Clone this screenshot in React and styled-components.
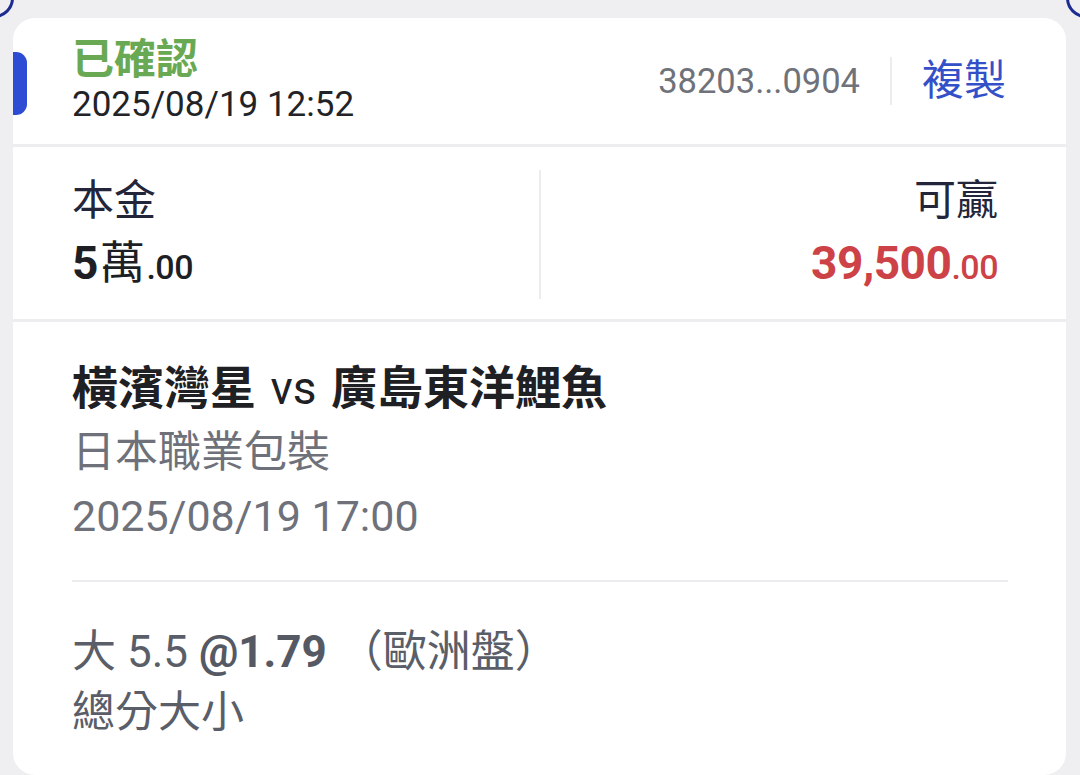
import React from "react";
import styled, { createGlobalStyle } from "styled-components";

const GlobalStyle = createGlobalStyle`
  html, body {
    margin: 0;
    padding: 0;
    background: #efeff1;
  }
  body {
    font-family: Roboto, "Noto Sans CJK TC", "Noto Sans", sans-serif;
    overflow: hidden;
  }
`;

const Page = styled.div`
  position: relative;
  width: 1080px;
  height: 775px;
  padding: 18px 14px 0 13px;
  box-sizing: border-box;
  overflow: hidden;
`;

const Ring = styled.div`
  position: absolute;
  top: -22px;
  ${(p) => (p.right ? "right: -26px;" : "left: -26px;")}
  width: 34px;
  height: 34px;
  border-radius: 50%;
  border: 3px solid #1c2c8f;
`;

const Card = styled.div`
  position: relative;
  background: #ffffff;
  border-radius: 22px;
  height: 757px;
  overflow: hidden;
`;

const Tab = styled.div`
  position: absolute;
  left: 0;
  top: 34px;
  width: 14px;
  height: 63px;
  background: #2e4bd3;
  border-radius: 0 11px 11px 0;
`;

const Header = styled.div`
  display: flex;
  align-items: center;
  justify-content: space-between;
  padding: 18px 60px 18px 59px;
  border-bottom: 3px solid #ededef;
`;

const Status = styled.div`
  display: flex;
  flex-direction: column;
`;

const StatusText = styled.div`
  color: #6aa953;
  font-size: 42px;
  font-weight: 700;
  line-height: 48px;
`;

const PlacedAt = styled.div`
  color: #222326;
  font-size: 35px;
  line-height: 42px;
`;

const Ref = styled.div`
  display: flex;
  align-items: center;
`;

const RefId = styled.span`
  color: #6f727a;
  font-size: 34.5px;
  line-height: 42px;
  padding-right: 30px;
`;

const VDivider = styled.div`
  width: 2px;
  align-self: stretch;
  background: #ececee;
  margin: ${(p) => p.inset || "0"};
`;

const CopyButton = styled.button`
  border: none;
  background: none;
  padding: 0 0 0 30px;
  color: #3450c8;
  font-family: inherit;
  font-size: 42px;
  line-height: 48px;
  cursor: pointer;
`;

const Amounts = styled.div`
  display: grid;
  grid-template-columns: 1fr 2px 1fr;
  padding: 0 58px 0 59px;
  border-bottom: 3px solid #ededef;
`;

const AmountCol = styled.div`
  display: flex;
  flex-direction: column;
  align-items: ${(p) => (p.end ? "flex-end" : "flex-start")};
  padding: 30px ${(p) => (p.end ? "10px" : "0")} 28px 0;
  gap: 14px;
`;

const AmountLabel = styled.div`
  color: #23253a;
  font-size: 42px;
  line-height: 48px;
`;

const AmountValue = styled.div`
  color: ${(p) => p.color || "#1d1f24"};
  font-size: 46px;
  font-weight: 700;
  line-height: 48px;
  letter-spacing: -0.5px;
`;

const Cents = styled.span`
  font-size: 34px;
  font-weight: 500;
`;

const Unit = styled.span`
  font-weight: 400;
  font-size: 45px;
  margin: 0 2px;
`;

const Match = styled.div`
  padding: 38px 58px 0 59px;
  display: flex;
  flex-direction: column;
`;

const Teams = styled.div`
  color: #1f2024;
  font-size: 46px;
  font-weight: 700;
  line-height: 56px;
`;

const Vs = styled.span`
  font-weight: 400;
  margin: 0 3px;
`;

const Line = styled.div`
  color: ${(p) => p.color || "#6e717a"};
  font-size: ${(p) => p.size || "43px"};
  line-height: 56px;
  margin-top: ${(p) => p.gap || "8px"};
`;

const HDivider = styled.div`
  height: 2px;
  background: #ececee;
  margin: 36px 0 42px;
`;

const Odds = styled.span`
  font-weight: 700;
  color: #555963;
`;

const Market = styled.span`
  margin-left: 12px;
`;

export default function App() {
  return (
    <>
      <GlobalStyle />
      <Page>
        <Ring />
        <Ring right />
        <Card>
          <Tab />
          <Header>
            <Status>
              <StatusText>已確認</StatusText>
              <PlacedAt>2025/08/19 12:52</PlacedAt>
            </Status>
            <Ref>
              <RefId>38203...0904</RefId>
              <VDivider />
              <CopyButton>複製</CopyButton>
            </Ref>
          </Header>
          <Amounts>
            <AmountCol>
              <AmountLabel>本金</AmountLabel>
              <AmountValue>
                5<Unit>萬</Unit>
                <Cents>.00</Cents>
              </AmountValue>
            </AmountCol>
            <VDivider inset="23px 0 20px" />
            <AmountCol end>
              <AmountLabel>可贏</AmountLabel>
              <AmountValue color="#cd4247">
                39,500<Cents>.00</Cents>
              </AmountValue>
            </AmountCol>
          </Amounts>
          <Match>
            <Teams>
              橫濱灣星 <Vs>vs</Vs> 廣島東洋鯉魚
            </Teams>
            <Line>日本職業包裝</Line>
            <Line>2025/08/19 17:00</Line>
            <HDivider />
            <Line color="#5a5e68" size="44px" gap="0">
              大 5.5 <Odds>@1.79</Odds>
              <Market>（歐洲盤）</Market>
            </Line>
            <Line color="#5a5e68" gap="4px">
              總分大小
            </Line>
          </Match>
        </Card>
      </Page>
    </>
  );
}
